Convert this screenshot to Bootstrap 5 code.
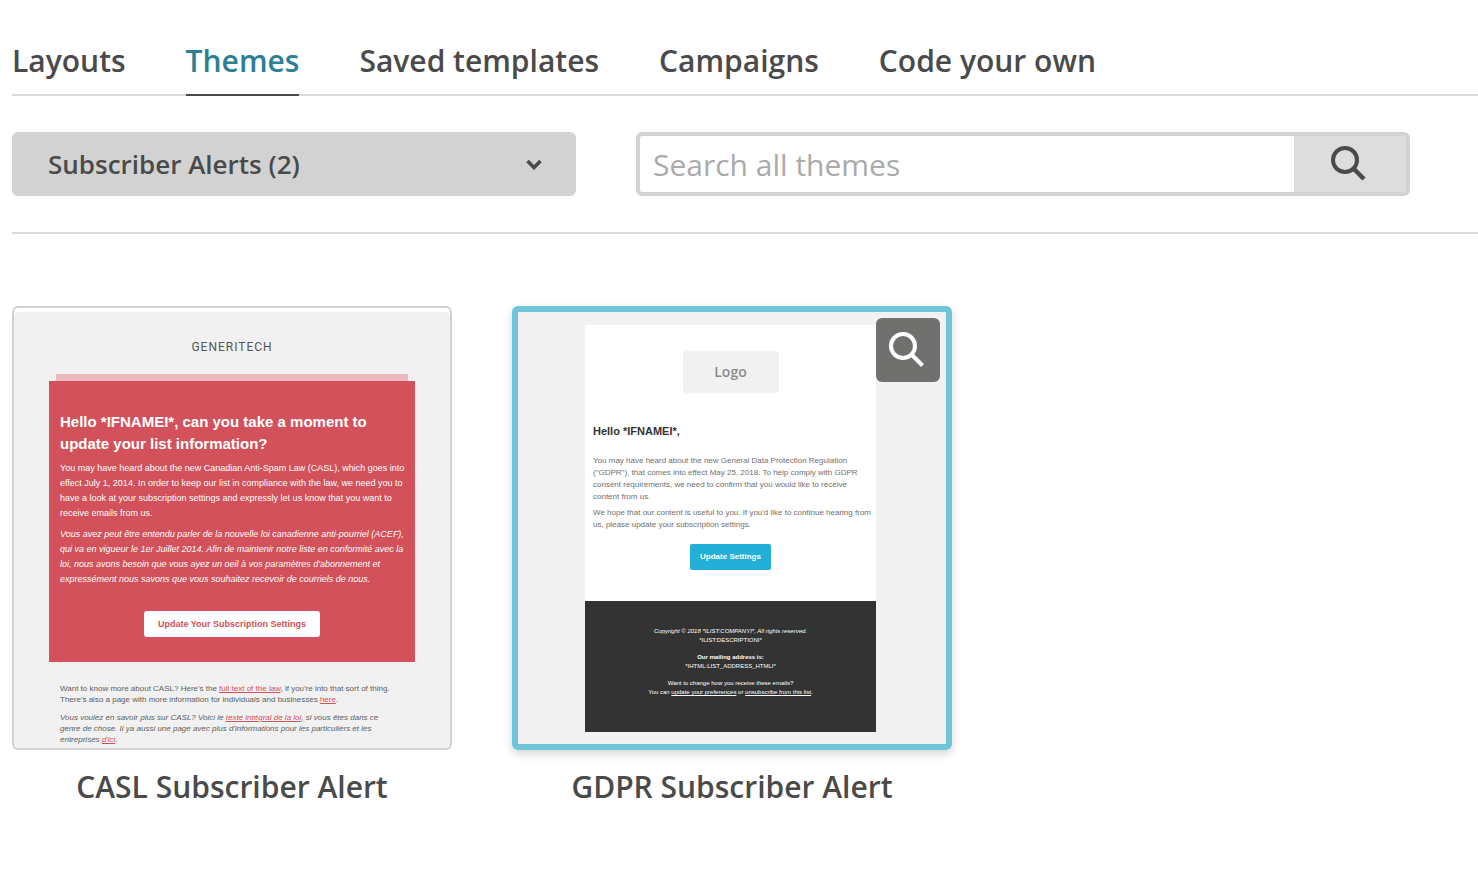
<!DOCTYPE html>
<html lang="en">
<head>
<meta charset="utf-8">
<meta name="viewport" content="width=device-width, initial-scale=1">
<title>Themes</title>
<link href="https://cdn.jsdelivr.net/npm/bootstrap@5.3.0/dist/css/bootstrap.min.css" rel="stylesheet">
<style>
  body { font-family: "Open Sans", sans-serif; color: #4a4a4a; }
  .page { padding: 40px 0 40px 12px; }

  .theme-tabs { gap: 60px; border-bottom: 2px solid #d9d9d9; }
  .theme-tabs .nav-link { padding: 0 0 12px; margin-bottom: -2px; border-bottom: 2px solid transparent; font-size: 30px; line-height: 42px; font-weight: 600; color: #4a4a4a; }
  .theme-tabs .nav-link.active { color: #2c7f95; border-color: #4a4a4a; }

  .filters { gap: 60px; padding: 36px 68px 36px 0; border-bottom: 2px solid #d9d9d9; }
  .filters > * { height: 64px; }
  .category { flex: 564 1 0; min-width: 0; }
  .category .form-select { height: 64px; padding: 0 72px 0 36px; border: 0; border-radius: 6px; font-size: 26px; font-weight: 600; color: #4a4a4a; background-color: #d2d2d2; background-size: 16px 12px; background-position: right 34px center;
    background-image: url("data:image/svg+xml,%3Csvg xmlns='http://www.w3.org/2000/svg' viewBox='0 0 16 12'%3E%3Cpath d='M1.500 3l6.500 6.500 6.500-6.500' fill='none' stroke='%234a4a4a' stroke-width='3.6'/%3E%3C/svg%3E"); }
  .search { flex: 766 1 0; min-width: 0; border: 4px solid #d2d2d2; border-radius: 6px; background: #d2d2d2; }
  .search .form-control { border: 0; border-radius: 2px 0 0 2px; padding: 0 13px; font-size: 30px; color: #4a4a4a; }
  .search .form-control::placeholder { color: #aaa; }
  .search .btn { width: 112px; padding: 0 4px 0 0; border: 0; border-radius: 0 2px 2px 0; background: #ddd; color: #4a4a4a; }

  .themes { gap: 60px; padding-top: 72px; }
  .theme { width: 440px; }
  .theme h2 { margin: 16px 0 0; font-size: 30px; line-height: 42px; font-weight: 600; text-align: center; }
  .thumb { height: 444px; border-radius: 6px; overflow: hidden; font-family: "Liberation Sans", sans-serif; background: #f1f1f1; }
  .thumb p { margin: 0; }

  .casl { border: 2px solid #d2d2d2; box-shadow: inset 0 4px #fff; padding: 29px 35px 0; }
  .brand { font-family: Roboto, sans-serif; font-size: 12px; line-height: 20px; letter-spacing: 1px; color: #555; text-align: center; }
  .band { height: 7px; margin: 17px 7px 0; background: #ebb8bb; }
  .notice { height: 281px; padding: 30px 11px 0; background: #d2515a; color: #fff; font-size: 9px; line-height: 15px; }
  .notice h3 { margin: 0 0 6px; font-size: 15px; line-height: 22px; font-weight: 700; }
  .notice p + p { margin-top: 6px; }
  .cta { display: block; margin: 24px auto 0; width: 176px; height: 26px; padding: 0; border: 0; border-radius: 3px; background: #fff; color: #d2515a; font-size: 9px; line-height: 26px; font-weight: 700; }
  .more { padding: 21px 0 0 11px; font-size: 8px; line-height: 11px; color: #606060; }
  .more p + p { margin-top: 7px; }
  .more a { color: #d2515a; }

  .gdpr { border: 6px solid #70c5da; border-radius: 6px; padding: 13px 70px 0 67px; }
  .selected { border-radius: 6px; box-shadow: 0 4px 10px rgba(0,0,0,.16); }
  .letter { height: 276px; padding: 26px 8px 0; background: #fff; font-size: 8px; line-height: 12px; color: #707070; }
  .logo { width: 96px; height: 42px; margin: 0 auto; border-radius: 4px; background: #f1f1f1; color: #8c8c8c; font: 600 14px/41px "Open Sans", sans-serif; text-align: center; }
  .letter h3 { margin: 30px 0 16px; font-size: 11px; line-height: 16px; font-weight: 700; color: #333; }
  .letter p + p { margin-top: 4px; }
  .letter .cta { width: 81px; margin-top: 13px; border-radius: 2px; background: #22afd8; color: #fff; font-size: 8px; }
  .imprint { height: 131px; padding-top: 26px; background: #333; color: #fff; font-size: 6px; line-height: 9px; text-align: center; }
  .imprint p + p { margin-top: 8px; }
  .imprint a { color: #fff; }
  .zoom-btn { top: 12px; right: 12px; width: 64px; height: 64px; padding: 0; border: 0; border-radius: 6px; background: #70706f; color: #fff; }
  .zoom-btn svg { display: block; }
</style>
</head>
<body>
<main class="page">
  <ul class="nav theme-tabs">
    <li class="nav-item"><a class="nav-link" href="#">Layouts</a></li>
    <li class="nav-item"><a class="nav-link active" aria-current="page" href="#">Themes</a></li>
    <li class="nav-item"><a class="nav-link" href="#">Saved templates</a></li>
    <li class="nav-item"><a class="nav-link" href="#">Campaigns</a></li>
    <li class="nav-item"><a class="nav-link" href="#">Code your own</a></li>
  </ul>

  <form class="filters d-flex">
    <div class="category">
      <select class="form-select" aria-label="Theme category">
        <option>Subscriber Alerts (2)</option>
      </select>
    </div>
    <div class="search d-flex">
      <input class="form-control" type="search" placeholder="Search all themes" aria-label="Search all themes">
      <button class="btn flex-shrink-0 d-flex align-items-center justify-content-center" type="button" aria-label="Search">
        <svg width="40" height="40" viewBox="0 0 40 40" fill="none" stroke="currentColor" stroke-width="4"><circle cx="17" cy="16" r="12"/><path d="M25.500 24.500L36 35" stroke-width="4.500"/></svg>
      </button>
    </div>
  </form>

  <section class="themes d-flex flex-wrap">
    <article class="theme">
      <div class="thumb casl">
        <div class="brand">GENERITECH</div>
        <div class="band"></div>
        <div class="notice text-nowrap">
          <h3>Hello *IFNAMEI*, can you take a moment to<br>update your list information?</h3>
          <p>You may have heard about the new Canadian Anti-Spam Law (CASL), which goes into<br>effect July 1, 2014. In order to keep our list in compliance with the law, we need you to<br>have a look at your subscription settings and expressly let us know that you want to<br>receive emails from us.</p>
          <p class="fst-italic">Vous avez peut être entendu parler de la nouvelle loi canadienne anti-pourriel (ACEF),<br>qui va en vigueur le 1er Juillet 2014. Afin de maintenir notre liste en conformité avec la<br>loi, nous avons besoin que vous ayez un oeil à vos paramètres d'abonnement et<br>expressément nous savons que vous souhaitez recevoir de courriels de nous.</p>
          <button class="cta" type="button">Update Your Subscription Settings</button>
        </div>
        <div class="more text-nowrap">
          <p>Want to know more about CASL? Here's the <a href="#">full text of the law</a>, if you're into that sort of thing.<br>There's also a page with more information for individuals and businesses <a href="#">here</a>.</p>
          <p class="fst-italic">Vous voulez en savoir plus sur CASL? Voici le <a href="#">texte intégral de la loi</a>, si vous êtes dans ce<br>genre de chose. Il ya aussi une page avec plus d'informations pour les particuliers et les<br>entreprises <a href="#">d'ici</a>.</p>
        </div>
      </div>
      <h2>CASL Subscriber Alert</h2>
    </article>

    <article class="theme">
      <div class="selected position-relative">
        <div class="thumb gdpr">
          <div class="letter text-nowrap">
            <div class="logo">Logo</div>
            <h3>Hello *IFNAMEI*,</h3>
            <p>You may have heard about the new General Data Protection Regulation<br>("GDPR"), that comes into effect May 25, 2018. To help comply with GDPR<br>consent requirements, we need to confirm that you would like to receive<br>content from us.</p>
            <p>We hope that our content is useful to you. If you'd like to continue hearing from<br>us, please update your subscription settings.</p>
            <button class="cta" type="button">Update Settings</button>
          </div>
          <div class="imprint text-nowrap">
            <p><em>Copyright © 2018 *ILIST:COMPANYI*, All rights reserved.</em><br>*ILIST:DESCRIPTIONI*</p>
            <p><b>Our mailing address is:</b><br>*IHTML:LIST_ADDRESS_HTMLI*</p>
            <p>Want to change how you receive these emails?<br>You can <a href="#">update your preferences</a> or <a href="#">unsubscribe from this list</a>.</p>
          </div>
        </div>
        <button class="zoom-btn position-absolute" type="button" aria-label="Preview theme">
          <svg width="64" height="64" viewBox="0 0 64 64" fill="none" stroke="currentColor" stroke-width="4"><circle cx="27" cy="28" r="12"/><path d="M35.500 36.500L46.500 47.500"/></svg>
        </button>
      </div>
      <h2>GDPR Subscriber Alert</h2>
    </article>
  </section>
</main>
<script src="https://cdn.jsdelivr.net/npm/bootstrap@5.3.0/dist/js/bootstrap.bundle.min.js"></script>
</body>
</html>
